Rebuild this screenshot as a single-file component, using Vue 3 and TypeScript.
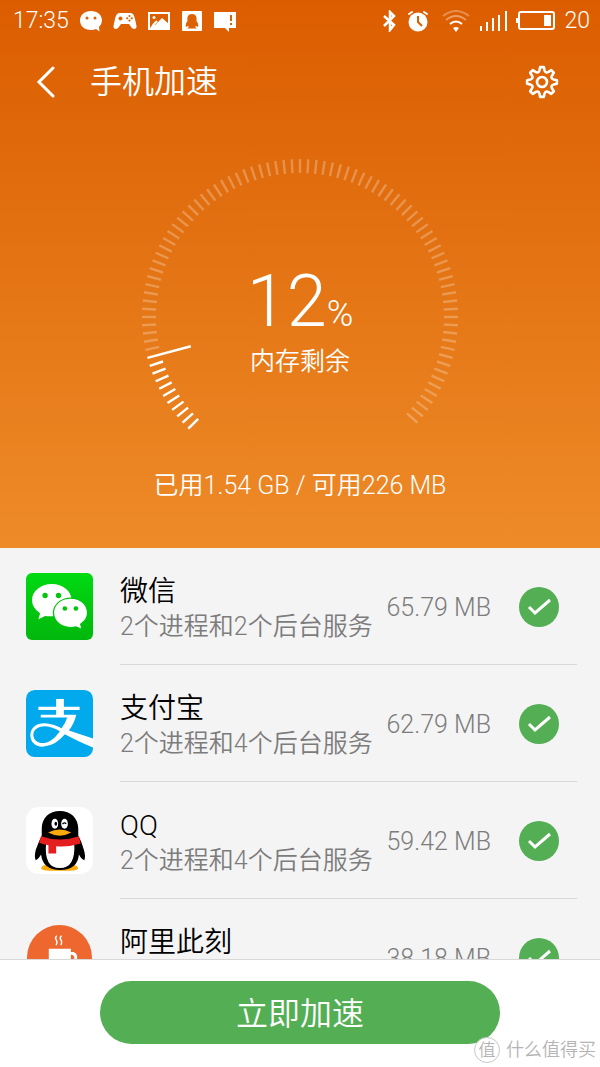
<script setup lang="ts">
import { ref } from 'vue'

interface AppRow {
  id: string
  name: string
  detail: string
  size: string
  checked: boolean
}

const apps = ref<AppRow[]>([
  { id: 'wechat', name: '微信', detail: '2个进程和2个后台服务', size: '65.79 MB', checked: true },
  { id: 'alipay', name: '支付宝', detail: '2个进程和4个后台服务', size: '62.79 MB', checked: true },
  { id: 'qq', name: 'QQ', detail: '2个进程和4个后台服务', size: '59.42 MB', checked: true },
  { id: 'ali', name: '阿里此刻', detail: '', size: '38.18 MB', checked: true },
])

const percent = 12

// 90 ticks, 3 degrees apart, starting at the lower left of the dial
const ticks = Array.from({ length: 90 }, (_, i) => {
  const current = i === Math.floor((percent * 90) / 100)
  return {
    angle: -135 + i * 3,
    inner: current ? -113 : -144,
    lit: i <= Math.floor((percent * 90) / 100),
  }
})

function gearPath(teeth: number, outer: number, inner: number): string {
  const step = 360 / teeth
  const at = (deg: number, r: number) => {
    const a = ((deg - 90) * Math.PI) / 180
    return `${(r * Math.cos(a)).toFixed(2)} ${(r * Math.sin(a)).toFixed(2)}`
  }
  let d = `M${at(-7, outer)}`
  for (let i = 0; i < teeth; i++) {
    const c = i * step
    d += `L${at(c + 7, outer)}L${at(c + 12, inner + 1)}Q${at(c + step / 2, inner - 2)} ${at(c + step - 12, inner + 1)}L${at(c + step - 7, outer)}`
  }
  return d + 'Z'
}
const gear = gearPath(8, 15, 11)
</script>

<template>
  <div class="page">
    <header class="hero">
      <div class="status">
        <div class="status-side">
          <span class="status-text">17:35</span>
          <svg width="24" height="22" viewBox="0 0 24 22">
            <path fill="#fff" d="M12 1C5.500 1 1 5 1 10.500S5.500 20 12 20q3 0 5-1l3.500 2.500-.5-4.500q3-3 3-6.500C23 5 18.500 1 12 1z" />
            <circle cx="8" cy="8" r="1.500" fill="#dd6003" /><circle cx="16" cy="8" r="1.500" fill="#dd6003" />
          </svg>
          <svg width="24" height="22" viewBox="0 0 24 22">
            <path fill="#fff" d="M7 3h10c3 0 4 2 5 6l1.500 7c.5 3-3 4-5 1.500L16 14H8l-2.500 3.500C3.500 20 0 19 .5 16L2 9c1-4 2-6 5-6z" />
            <circle cx="7.500" cy="8.500" r="2" fill="#dd6003" />
            <g fill="#dd6003"><circle cx="16.500" cy="6" r="1.100" /><circle cx="16.500" cy="10.600" r="1.100" /><circle cx="14.200" cy="8.300" r="1.100" /><circle cx="18.800" cy="8.300" r="1.100" /></g>
          </svg>
          <svg width="24" height="22" viewBox="0 0 24 22">
            <rect x="2" y="3" width="20" height="16" fill="none" stroke="#fff" stroke-width="2" />
            <path fill="#fff" d="M3 18l3-4 2 1 7-7 7 6v4z" /><path d="M6 15l4-4" stroke="#fff" stroke-width="2" /><circle cx="7" cy="7.500" r="1.500" fill="#fff" />
          </svg>
          <svg width="22" height="22" viewBox="1 0 22 22">
            <rect x="2" y="1" width="20" height="20" rx="1" fill="#fff" />
            <path fill="#dd6003" d="M12 4c-4 0-5 3-4.500 7-2 2-2 5-1.500 6l2-1 1 1-2 1.500h10L15 17l1-1 2 1c.5-1 .5-4-1.500-6C17 7 16 4 12 4z" />
          </svg>
          <svg width="24" height="22" viewBox="0 0 24 22">
            <path fill="#fff" d="M1 2h22v16h-7v4l-4-4H1z" /><path stroke="#dd6003" stroke-width="2" d="M18 5v6M18 13v2" />
          </svg>
        </div>
        <div class="status-side right">
          <svg width="16" height="22" viewBox="0 0 16 22">
            <path fill="none" stroke="#fff" stroke-width="2.500" d="M2 6l10 9-4 5V2l4 4-10 10" />
          </svg>
          <svg width="22" height="22" viewBox="0 0 22 22">
            <circle cx="11" cy="12" r="9.500" fill="#fff" />
            <path fill="none" stroke="#fff" stroke-width="2" stroke-linecap="round" d="M2 4l3-2M20 4l-3-2" />
            <path fill="none" stroke="#dd6003" stroke-width="2" d="M11 6v6l4 4" />
          </svg>
          <svg class="wifi" width="28" height="22" viewBox="0 0 28 22">
            <g fill="none" stroke="#fff" stroke-width="2">
              <path opacity=".3" d="M1 6q13-10 26 0" /><path opacity=".4" d="M4 10q10-8 20 0" /><path d="M8 14q6-5 12 0" />
            </g>
            <path fill="#fff" d="M11 18q3-2 6 0l-3 4z" />
          </svg>
          <svg width="28" height="22" viewBox="0 0 28 22">
            <path stroke="#fff" stroke-width="2" d="M2 21v-5M8 21v-9M14 21V8M20 21V5M27 21V1" />
          </svg>
          <svg width="39" height="22" viewBox="0 0 39 22">
            <rect x="3" y="2" width="35" height="17" rx="2" fill="none" stroke="#fff" stroke-width="2" />
            <path fill="#fff" d="M0 8h2v5H0zM28 5h7v11h-7z" />
          </svg>
          <span class="status-text">20</span>
        </div>
      </div>

      <nav class="nav">
        <button class="icon-button" type="button" aria-label="返回">
          <svg width="20" height="32" viewBox="0 0 20 32">
            <path fill="none" stroke="#fff" stroke-width="3" stroke-linecap="round" d="M18 2L4 16l14 14" />
          </svg>
        </button>
        <h1>手机加速</h1>
        <button class="icon-button" type="button" aria-label="设置">
          <svg width="36" height="36" viewBox="-18 -18 36 36">
            <g fill="none" stroke="#fff" stroke-width="2.600" stroke-linejoin="round"><path :d="gear" /><circle r="5" /></g>
          </svg>
        </button>
      </nav>

      <section class="gauge">
        <svg class="dial" viewBox="-160 -160 320 280">
          <line
            v-for="t in ticks"
            :key="t.angle"
            :class="{ lit: t.lit }"
            x1="0"
            y1="-158"
            x2="0"
            :y2="t.inner"
            :transform="`rotate(${t.angle})`"
          />
        </svg>
        <div class="reading">
          <p class="percent">{{ percent }}<span>%</span></p>
          <p class="caption">内存剩余</p>
        </div>
      </section>
      <p class="usage">已用1.54 GB / 可用226 MB</p>
    </header>

    <main class="list">
      <ul>
        <li v-for="app in apps" :key="app.id" class="row">
          <svg v-if="app.id === 'wechat'" class="app-icon" viewBox="0 0 200 200">
            <defs><linearGradient id="wx" x2="0" y2="1"><stop stop-color="#00da12" /><stop offset="1" stop-color="#02b70c" /></linearGradient></defs>
            <rect width="200" height="200" rx="18" fill="url(#wx)" />
            <path fill="#fff" d="M77 33C44 33 18 54 18 81q0 23 24 39l-5 18 20-10q10 2 20 1c33 0 59-21 59-48S110 33 77 33z" />
            <ellipse cx="133" cy="119" rx="53" ry="46" fill="#03c50e" />
            <path fill="#fff" d="M133 77c-28 0-49 18-49 42s21 42 49 42q8 0 16-2l16 7-4-14q21-13 21-33c0-24-21-42-49-42z" />
            <g fill="#03c50e"><circle cx="57" cy="67" r="8" /><circle cx="97" cy="67" r="8" /><circle cx="116" cy="106" r="7" /><circle cx="149" cy="106" r="7" /></g>
          </svg>
          <svg v-else-if="app.id === 'alipay'" class="app-icon" viewBox="0 0 200 200">
            <rect width="200" height="200" rx="26" fill="#02a9ed" />
            <path fill="#fff" d="M90 27h23v23h47v10h-47v14h37q-6 27-22 47l72 24v27q-49-21-84-40-28 34-63 37c-25 2-40-14-40-34 0-22 17-36 42-36 18 0 35 7 51 15q12-15 17-32H44V74h46V60H37V50h53z" />
            <path fill="#02a9ed" d="M101 123q-22-14-44-15c-23 0-36 12-35 27 1 16 14 25 33 23 20-3 34-18 46-35z" />
          </svg>
          <svg v-else-if="app.id === 'qq'" class="app-icon" viewBox="0 0 200 200">
            <rect width="200" height="200" rx="38" fill="#fff" />
            <path fill="#faab07" d="M45 183q2-10 25-11h60q23 1 26 11-2 7-25 7H70q-23 0-25-7z" />
            <path fill="#000" d="M101 12C69 12 47 33 47 65v20q-9 18-18 43-5 21 0 31 7-2 16-17 5 46 57 46t56-46q8 15 16 17 5-10-1-31-7-25-17-43V65c0-32-23-53-55-53z" />
            <path fill="#fff" d="M60 108q41 10 84 0 5 74-43 74t-41-74z" />
            <path fill="#e51f20" d="M45 87q56 20 113 0l5 22q-34 11-73 8v22H67v-25q-14-2-28-7z" />
            <ellipse cx="86" cy="50" rx="10" ry="15" fill="#fff" /><ellipse cx="115" cy="50" rx="10" ry="15" fill="#fff" />
            <ellipse cx="89" cy="50" rx="4" ry="6" fill="#000" /><path d="M109 51q5-7 11-1" fill="none" stroke="#000" stroke-width="4" />
            <path fill="#faab07" d="M66 76q35-17 69 0-34 19-69 0z" />
          </svg>
          <svg v-else class="app-icon" viewBox="0 0 200 200">
            <circle cx="100" cy="100" r="97" fill="#ed672f" />
            <path fill="#fff" d="M68 74h66v10c26-5 25 36-3 36q-8 22-24 22H90q-22 0-22-28zM134 92v20c14 0 13-22 0-20z" />
            <path fill="none" stroke="#fff" stroke-width="4" d="M92 35q-7 6-2 12t0 16M106 35q-7 6-2 12t0 16" />
          </svg>
          <div class="body">
            <div class="text">
              <h2>{{ app.name }}</h2>
              <p>{{ app.detail }}</p>
            </div>
            <span class="size">{{ app.size }}</span>
            <label class="check">
              <input v-model="app.checked" type="checkbox" :aria-label="app.name" />
              <svg viewBox="0 0 40 40"><path d="M10 20l6 6 15-13" /></svg>
            </label>
          </div>
        </li>
      </ul>
    </main>

    <footer class="footer">
      <button class="boost" type="button">立即加速</button>
      <div class="watermark"><span class="seal">值</span><span>什么值得买</span></div>
    </footer>
  </div>
</template>

<style>
body {
  margin: 0;
}
</style>

<style scoped>
.page {
  display: flex;
  flex-direction: column;
  height: 100vh;
  overflow: hidden;
  font-family: Roboto, "Noto Sans CJK SC", sans-serif;
  font-weight: 350;
  background: #f4f4f4;
}
h1,
h2,
p,
ul {
  margin: 0;
  padding: 0;
  font-weight: inherit;
}
svg {
  display: block;
  flex: none;
}
button {
  border: 0;
  padding: 0;
  font: inherit;
  color: #fff;
  background: none;
}
.hero {
  flex: none;
  color: #fff;
  background: linear-gradient(#dc5d00, #e06b0c 30%, #ee8b28);
  padding-bottom: 46px;
}
.status {
  display: flex;
  justify-content: space-between;
  align-items: center;
  height: 42px;
  padding: 0 10px 0 13px;
}
.status-side {
  display: flex;
  align-items: center;
  gap: 10px;
}
.status-side.right {
  gap: 9px;
}
.wifi {
  margin-left: 4px;
}
.status-text {
  font-size: 23px;
  line-height: 28px;
}
.nav {
  display: flex;
  align-items: center;
  height: 80px;
  padding: 0 40px 0 35px;
}
.nav h1 {
  flex: 1;
  margin-left: 35px;
  font-size: 32px;
  line-height: 40px;
}
.gauge {
  display: grid;
  justify-content: center;
  margin-top: 35px;
}
.dial {
  grid-area: 1 / 1;
  width: 320px;
}
.dial line {
  stroke: #fff;
  stroke-opacity: 0.26;
  stroke-width: 2.4;
}
.dial line.lit {
  stroke-opacity: 1;
}
.reading {
  grid-area: 1 / 1;
  padding-top: 109px;
  text-align: center;
}
.percent {
  font-size: 72px;
  line-height: 72px;
}
.percent span {
  font-size: 36px;
}
.caption {
  margin-top: -4px;
  font-size: 25px;
  line-height: 32px;
}
.usage {
  margin-top: 33px;
  font-size: 25px;
  line-height: 32px;
  text-align: center;
}
.list {
  flex: 1;
  min-height: 0;
  overflow: hidden;
}
.row {
  display: flex;
  align-items: center;
  padding: 0 23px 0 26px;
}
.app-icon {
  width: 67px;
  height: 67px;
}
.body {
  display: flex;
  flex: 1;
  align-items: center;
  box-sizing: border-box;
  height: 117px;
  margin-left: 27px;
  border-bottom: 1px solid #d8d8d8;
  padding: 2px 18px 0 0;
}
.text {
  flex: 1;
  padding-top: 4px;
}
.text h2 {
  font-size: 28px;
  line-height: 36px;
  color: #000;
}
.text p {
  min-height: 34px;
  font-size: 25px;
  line-height: 34px;
  color: #7c7c7c;
}
.size {
  font-size: 25px;
  color: #7c7c7c;
}
.check {
  display: grid;
  width: 40px;
  height: 40px;
  margin-left: 28px;
}
.check input {
  grid-area: 1 / 1;
  appearance: none;
  width: 40px;
  height: 40px;
  margin: 0;
  border-radius: 50%;
  background: #c8c8c8;
}
.check input:checked {
  background: #54ae54;
}
.check svg {
  grid-area: 1 / 1;
  z-index: 1;
  pointer-events: none;
  fill: none;
  stroke: #fff;
  stroke-width: 3;
}
.footer {
  position: relative;
  flex: none;
  padding: 21px 100px 23px;
  border-top: 1px solid #d8d8d8;
  background: #fff;
}
.boost {
  display: block;
  box-sizing: border-box;
  width: 100%;
  height: 63px;
  border-radius: 32px;
  padding-bottom: 4px;
  font-size: 32px;
  background: #54ae54;
}
.watermark {
  position: absolute;
  right: 4px;
  bottom: 4px;
  display: flex;
  align-items: center;
  gap: 6px;
  font-size: 18px;
  line-height: 26px;
  color: #b4b4b4;
}
.seal {
  width: 24px;
  height: 24px;
  border: 1px solid #c8c8c8;
  border-radius: 50%;
  font-size: 17px;
  line-height: 24px;
  text-align: center;
  background: #fff;
}
</style>
